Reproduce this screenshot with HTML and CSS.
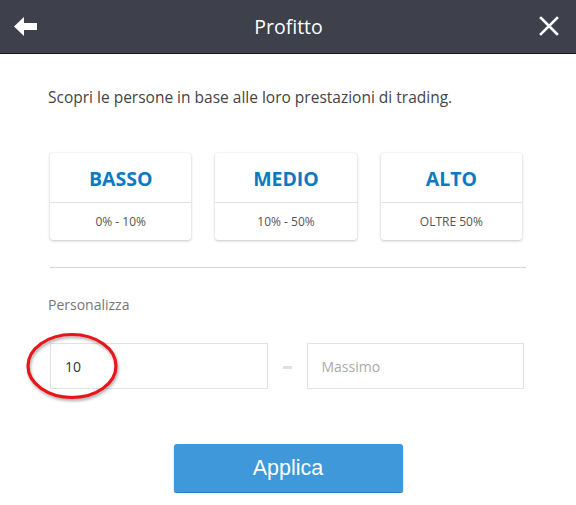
FILE: index.html
```html
<!DOCTYPE html>
<html lang="it">
<head>
<meta charset="utf-8">
<title>Profitto</title>
<link rel="stylesheet" href="styles.css">
</head>
<body>
<header class="topbar">
  <button class="icon-btn back" aria-label="Indietro">
    <svg width="24" height="19" viewBox="0 0 24 19"><polygon points="0,9.5 10,0 10,6 23,6 23,13 10,13 10,19" fill="#fff"/></svg>
  </button>
  <h1 class="title">Profitto</h1>
  <button class="icon-btn close" aria-label="Chiudi">
    <svg width="20" height="20" viewBox="0 0 20 20"><path d="M2 2 L18 18 M18 2 L2 18" stroke="#fff" stroke-width="2.6" stroke-linecap="square"/></svg>
  </button>
</header>
<main class="content">
  <p class="intro">Scopri le persone in base alle loro prestazioni di trading.</p>
  <div class="cards">
    <div class="card"><div class="card-title">BASSO</div><div class="card-range">0% - 10%</div></div>
    <div class="card"><div class="card-title">MEDIO</div><div class="card-range">10% - 50%</div></div>
    <div class="card"><div class="card-title">ALTO</div><div class="card-range">OLTRE 50%</div></div>
  </div>
  <hr class="sep">
  <div class="label">Personalizza</div>
  <div class="range-row">
    <div class="field">10</div>
    <div class="dash"></div>
    <div class="field placeholder">Massimo</div>
    <svg class="mark" width="96" height="72" viewBox="0 0 96 72">
      <defs><filter id="sh" x="-20%" y="-20%" width="140%" height="140%"><feDropShadow dx="1" dy="2" stdDeviation="1.5" flood-color="#000" flood-opacity="0.35"/></filter></defs>
      <ellipse cx="46" cy="33" rx="44" ry="31.5" fill="none" stroke="#e8141a" stroke-width="3.2" filter="url(#sh)"/>
    </svg>
  </div>
  <div class="actions"><button class="apply">Applica</button></div>
</main>
</body>
</html>
```
FILE: styles.css
```css
* { box-sizing: border-box; }
html, body { margin: 0; padding: 0; background: #fff; }
body { font-family: "Open Sans", "Noto Sans", sans-serif; color: #444; }

.topbar {
  height: 54px;
  background: #3e404c;
  border-bottom: 1px solid #15161a;
  display: flex;
  align-items: center;
  justify-content: space-between;
  padding: 0 17px 0 14px;
}
.icon-btn { background: none; border: 0; padding: 0; display: flex; cursor: pointer; }
.back { margin-top: -1px; }
.close { margin-top: -1px; }
.title {
  margin: 0;
  font-size: 19.5px;
  font-weight: 400;
  color: #fff;
}

.content { padding: 0 50px; }
.intro {
  margin: 33px 0 0 -2px;
  font-size: 15.5px;
  line-height: 20px;
  color: #444;
}
.cards {
  display: flex;
  gap: 24px;
  margin-top: 46px;
  padding-right: 4px;
}
.card {
  flex: 1;
  height: 87px;
  background: #fff;
  border-radius: 3px;
  box-shadow: 0 1px 3px rgba(0,0,0,0.22), 0 0 1px rgba(0,0,0,0.12);
  display: flex;
  flex-direction: column;
}
.card-title {
  height: 50px;
  border-bottom: 1px solid #e2e2e2;
  display: flex;
  align-items: center;
  justify-content: center;
  font-size: 19.5px;
  font-weight: 700;
  color: #0b7bc1;
  padding-top: 2px;
}
.card-range {
  flex: 1;
  display: flex;
  align-items: center;
  justify-content: center;
  font-size: 12px;
  color: #555;
}
.sep {
  border: 0;
  border-top: 1px solid #d4d4d4;
  margin: 27px 0 0;
}
.label {
  margin-top: 27px;
  margin-left: -2px;
  font-size: 14px;
  line-height: 20px;
  color: #777;
}
.range-row {
  position: relative;
  display: flex;
  align-items: center;
  margin-top: 28px;
  gap: 15px;
  padding-right: 2px;
}
.field {
  flex: 1;
  height: 46px;
  border: 1px solid #e2e2e2;
  display: flex;
  align-items: center;
  padding-left: 14px;
  font-size: 14px;
  color: #333;
}
.field.placeholder { color: #aaa; }
.dash { width: 9px; height: 3px; background: #e0e0e0; margin-top: 2px; }
.mark { position: absolute; left: -24px; top: -10px; pointer-events: none; }

.actions { display: flex; justify-content: center; margin-top: 55px; }
.apply {
  width: 229px;
  height: 49px;
  background: #3e98d9;
  border: 0;
  border-bottom: 1px solid #2f7fbd;
  border-radius: 3px;
  box-shadow: 0 1px 2px rgba(0,0,0,0.25);
  color: #fff;
  font-family: "Liberation Sans", Arial, sans-serif;
  font-size: 21.5px;
}
```
